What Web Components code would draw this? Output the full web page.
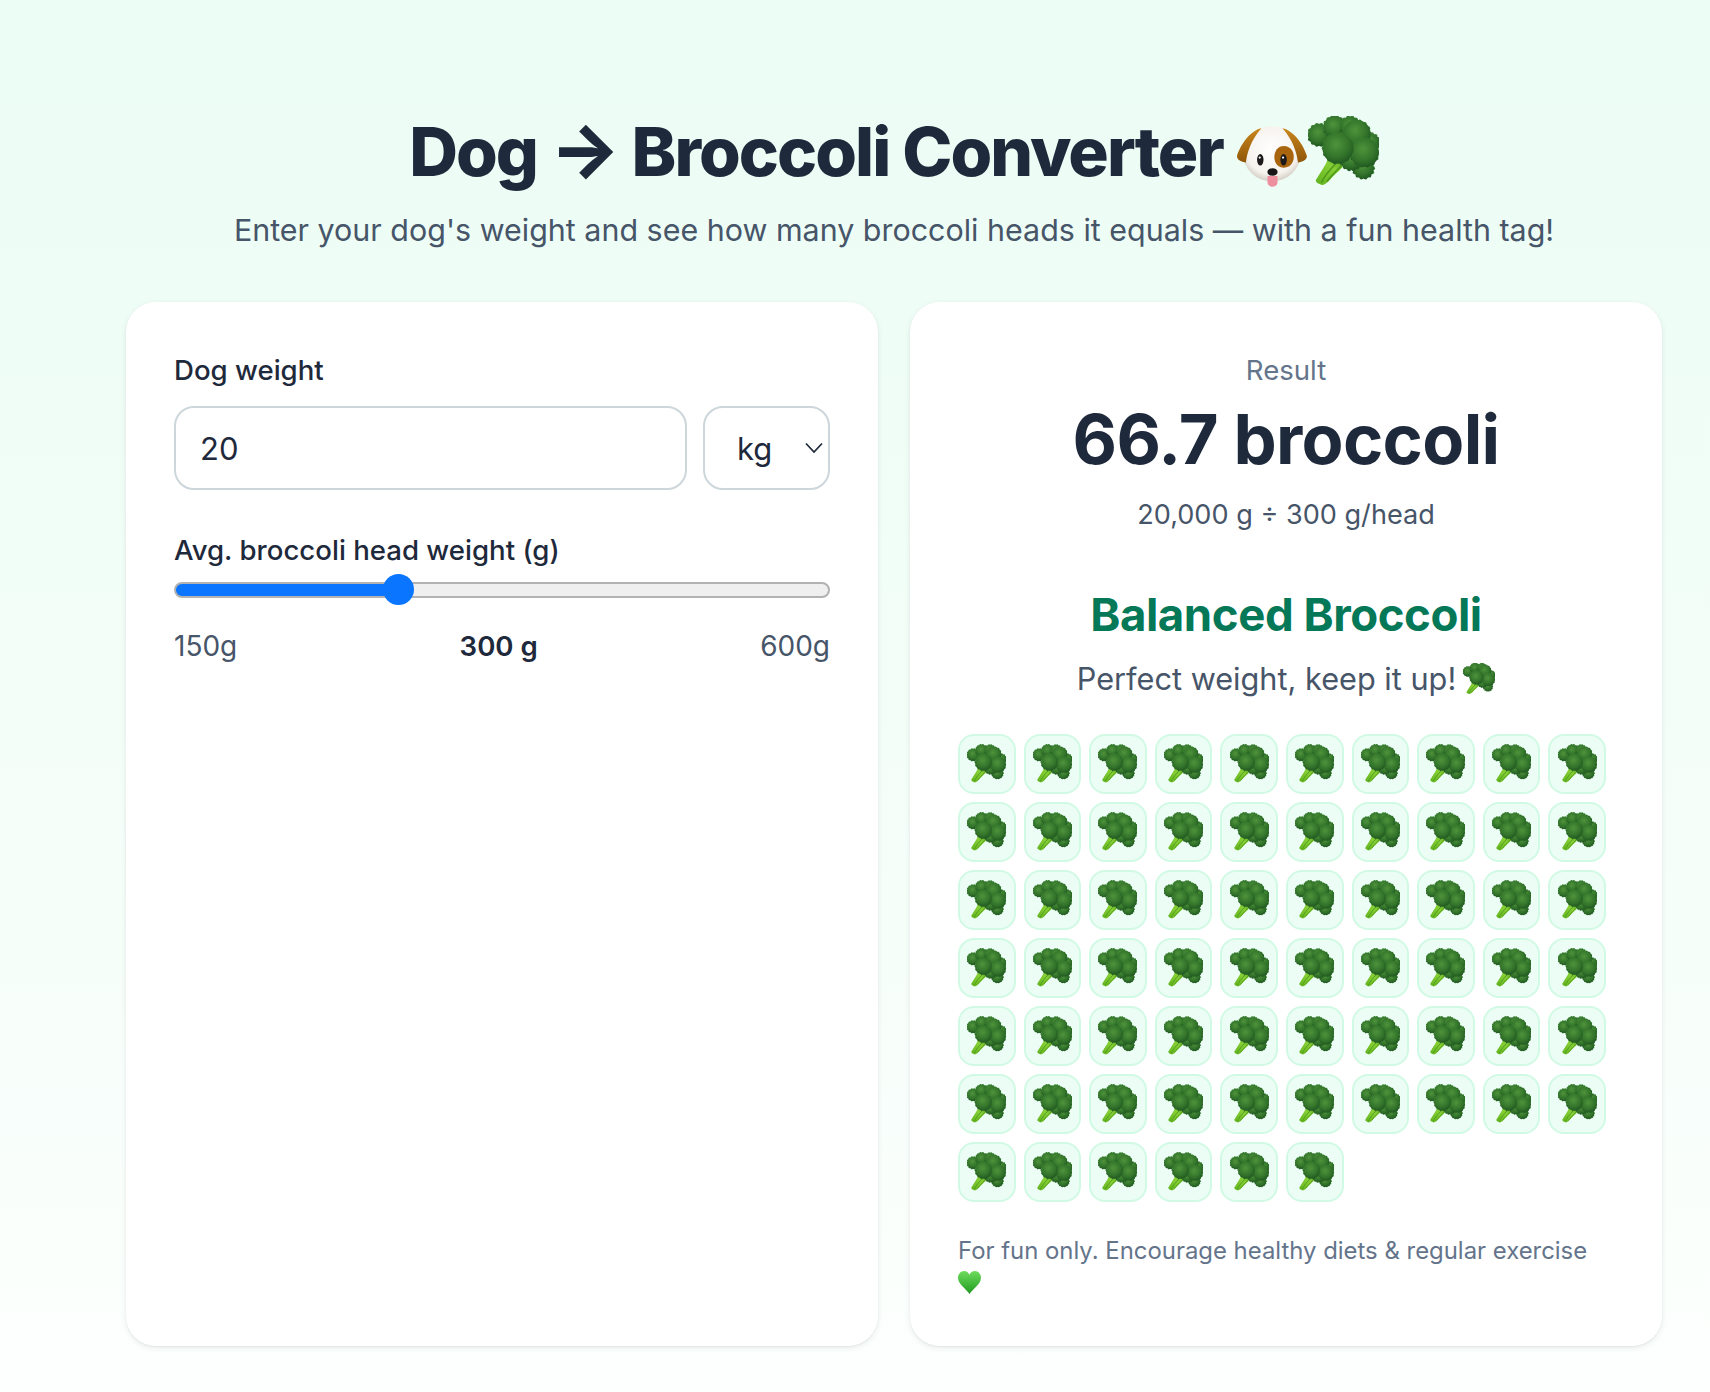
<!DOCTYPE html>
<html lang="en">
<head>
<meta charset="utf-8">
<title>Dog → Broccoli Converter</title>
<style>
  html, body { margin: 0; padding: 0; }
  body { font-family: Inter, "Noto Sans", sans-serif; color: #1e293b; }
</style>
</head>
<body>
<bc-app></bc-app>
<script>
// Crown of the broccoli: each floret is a shaded disc with a bumpy rim
const FLORETS = [
  [50, 47, 9.5], [39, 39, 10], [56, 24, 8.5], [10, 17, 10], [24, 10, 10],
  [38, 9.5, 9], [44, 16, 12.5], [51, 33, 13], [27, 29, 14]
];

function floretMarkup([cx, cy, r]) {
  let bumps = '';
  for (let i = 0; i < 14; i++) {
    const a = (i / 14) * Math.PI * 2;
    const x = (cx + Math.cos(a) * r * 0.92).toFixed(1);
    const y = (cy + Math.sin(a) * r * 0.92).toFixed(1);
    bumps += `<circle cx="${x}" cy="${y}" r="1.7" fill="${i > 1 && i < 7 ? '#235c22' : '#37802f'}"/>`;
  }
  return `${bumps}<circle cx="${cx}" cy="${cy}" r="${r}" fill="url(#f)"/>`;
}

const BROCCOLI_SVG = `
  <svg viewBox="0 0 64 64" width="100%" height="100%" aria-hidden="true">
    <defs>
      <radialGradient id="f" cx="44%" cy="38%" r="66%">
        <stop offset="0" stop-color="#4f933b"/>
        <stop offset=".62" stop-color="#33742b"/>
        <stop offset="1" stop-color="#1f5620"/>
      </radialGradient>
      <linearGradient id="s" x1="0" y1="1" x2="1" y2="0">
        <stop offset="0" stop-color="#5fb01e"/>
        <stop offset=".6" stop-color="#86cf35"/>
        <stop offset="1" stop-color="#4f9a22"/>
      </linearGradient>
    </defs>
    <path d="M7 58 C11 51 15 46 18 39 L24 40 L36 40 C33 45 27 50 22 55 C18 60 14 63 12 62 C9 61 7 60 7 58Z" fill="url(#s)"/>
    <path d="M12 60 C15 54 20 48 25 43 M17 59 C21 54 25 50 30 45" stroke="#4f9a1c" stroke-width="1.4" fill="none"/>
    <path d="M14 12 L40 6 L58 26 L52 42 L30 38 Z" fill="#245f23"/>
    ${FLORETS.map(floretMarkup).join('')}
  </svg>`;

const DOG_SVG = `
  <svg viewBox="0 0 64 64" width="100%" height="100%" aria-hidden="true">
    <defs>
      <radialGradient id="h" cx="50%" cy="42%" r="62%">
        <stop offset="0" stop-color="#ffffff"/>
        <stop offset=".72" stop-color="#f6f3ee"/>
        <stop offset="1" stop-color="#c9c2b8"/>
      </radialGradient>
      <linearGradient id="e" x1="0" y1="0" x2="0" y2="1">
        <stop offset="0" stop-color="#c9861c"/>
        <stop offset="1" stop-color="#8f5608"/>
      </linearGradient>
    </defs>
    <ellipse cx="31.5" cy="34" rx="26" ry="25" fill="url(#h)"/>
    <path d="M22 11 C12 13 3 26 0 36 C0 40 4 41 8 42 C9 33 13 21 22 11Z" fill="url(#e)"/>
    <path d="M41 11 C51 13 60 26 63 36 C63 40 59 41 55 42 C54 33 50 21 41 11Z" fill="url(#e)"/>
    <path d="M42 27 C49 27 52 33 51 39 C50 45 44 48 39 46 C34 44 33 38 34 34 C35 30 38 27 42 27Z" fill="#a9650d"/>
    <ellipse cx="21" cy="39.5" rx="2.9" ry="5.2" fill="#1c1a1a"/>
    <ellipse cx="42" cy="39.5" rx="2.9" ry="5.2" fill="#1c1a1a"/>
    <circle cx="20.5" cy="37.5" r="1" fill="#fff"/>
    <circle cx="41.5" cy="37.5" r="1" fill="#fff"/>
    <path d="M27.5 54 L36.5 54 L36.5 60 C36.5 65 27.5 65 27.5 60Z" fill="#ee8f9f"/>
    <ellipse cx="32" cy="50.5" rx="4.6" ry="3.4" fill="#161616"/>
  </svg>`;

const HEART_SVG = `
  <svg viewBox="0 0 24 24" width="100%" height="100%" aria-hidden="true">
    <defs>
      <linearGradient id="g" x1="0" y1="0" x2="0" y2="1">
        <stop offset="0" stop-color="#6fdc5c"/>
        <stop offset="1" stop-color="#1f9a20"/>
      </linearGradient>
    </defs>
    <path d="M12 24 C9 19 0 14 0 7 C0 3 3 0 6.4 0 C9 0 11 1.6 12 4 C13 1.6 15 0 17.6 0 C21 0 24 3 24 7 C24 14 15 19 12 24Z" fill="url(#g)"/>
  </svg>`;

const EMOJI = { broccoli: BROCCOLI_SVG, dog: DOG_SVG, heart: HEART_SVG };

class BcEmoji extends HTMLElement {
  constructor() {
    super();
    this.attachShadow({ mode: 'open' });
  }

  connectedCallback() {
    this.shadowRoot.innerHTML = `
      <style>
        :host { display: inline-block; width: 1em; height: 1em; line-height: 0; }
      </style>
      ${EMOJI[this.getAttribute('kind')] || ''}
    `;
  }
}
customElements.define('bc-emoji', BcEmoji);

class BcCard extends HTMLElement {
  constructor() {
    super();
    this.attachShadow({ mode: 'open' });
    this.shadowRoot.innerHTML = `
      <style>
        :host {
          display: block;
          box-sizing: border-box;
          background: #fff;
          border-radius: 30px;
          padding: 49px 48px 48px;
          box-shadow: 0 2px 6px rgba(15, 23, 42, 0.08), 0 1px 2px rgba(15, 23, 42, 0.05);
        }
      </style>
      <slot></slot>
    `;
  }
}
customElements.define('bc-card', BcCard);

class BcHeader extends HTMLElement {
  constructor() {
    super();
    this.attachShadow({ mode: 'open' });
    this.shadowRoot.innerHTML = `
      <style>
        :host { display: block; text-align: center; }
        h1 {
          margin: 0;
          font-size: 67.5px;
          line-height: 84px;
          font-weight: 800;
          letter-spacing: -0.029em;
          color: #1e293b;
          display: flex;
          justify-content: center;
          align-items: center;
        }
        .arrow { font-size: 1.1em; line-height: 1; }
        .icons { display: inline-flex; margin-left: 14px; margin-top: -2px; }
        bc-emoji { width: 71px; height: 71px; }
        p {
          margin: 14px 0 0;
          font-size: 30.45px;
          line-height: 44px;
          color: #475569;
        }
      </style>
      <h1><span>Dog <span class="arrow">→</span> Broccoli Converter</span><span class="icons"><bc-emoji kind="dog"></bc-emoji><bc-emoji kind="broccoli"></bc-emoji></span></h1>
      <p>Enter your dog's weight and see how many broccoli heads it equals — with a fun health tag!</p>
    `;
  }
}
customElements.define('bc-header', BcHeader);

class BcWeightForm extends HTMLElement {
  constructor() {
    super();
    this.attachShadow({ mode: 'open' });
    this.shadowRoot.innerHTML = `
      <style>
        :host { display: block; }
        label { display: block; font-size: 27.6px; line-height: 38px; font-weight: 500; color: #1e293b; }
        .row { display: flex; gap: 16px; margin-top: 17px; }
        input[type=number], select {
          box-sizing: border-box;
          height: 84px;
          border: 2px solid #cdd6da;
          border-radius: 20px;
          background: #fff;
          font: 400 31px Inter, sans-serif;
          color: #1e293b;
          outline: none;
          appearance: none;
          -moz-appearance: textfield;
        }
        input[type=number] { flex: 1; min-width: 0; padding: 0 24px; }
        input[type=number]::-webkit-inner-spin-button { appearance: none; }
        .select { position: relative; width: 127px; }
        select { width: 100%; padding: 0 0 0 32px; }
        .select svg { position: absolute; right: 7px; top: 36px; width: 18px; height: 12px; pointer-events: none; }
        .head { margin-top: 41px; }
        input[type=range] {
          display: block;
          appearance: none;
          width: 100%;
          height: 31px;
          margin: 5px 0 0;
          background: transparent;
        }
        input[type=range]::-webkit-slider-runnable-track {
          box-sizing: border-box;
          height: 16px;
          border-radius: 8px;
          border: 2px solid #b2b2b2;
          background: linear-gradient(to right, #0a75ff 0 222px, #efefef 222px);
        }
        input[type=range]::-webkit-slider-thumb {
          appearance: none;
          width: 31px;
          height: 31px;
          margin-top: -9.5px;
          border-radius: 50%;
          background: #0a75ff;
        }
        .scale {
          display: flex;
          justify-content: space-between;
          margin-top: 21px;
          font-size: 28px;
          line-height: 40px;
          color: #475569;
        }
        .scale b { font-weight: 600; font-size: 27.6px; color: #1e293b; }
      </style>
      <label for="w">Dog weight</label>
      <div class="row">
        <input id="w" type="number" value="20">
        <div class="select">
          <select aria-label="Unit"><option>kg</option><option>lb</option></select>
          <svg viewBox="0 0 18 12" fill="none" stroke="#1e293b" stroke-width="1.7"><path d="M1 1.5 L9 10 L17 1.5"/></svg>
        </div>
      </div>
      <label class="head" for="r">Avg. broccoli head weight (g)</label>
      <input id="r" type="range" min="150" max="600" value="300">
      <div class="scale"><span>150g</span><b>300 g</b><span>600g</span></div>
    `;
  }
}
customElements.define('bc-weight-form', BcWeightForm);

class BcTile extends HTMLElement {
  constructor() {
    super();
    this.attachShadow({ mode: 'open' });
    this.shadowRoot.innerHTML = `
      <style>
        :host {
          display: flex;
          align-items: center;
          justify-content: center;
          box-sizing: border-box;
          width: 57.6px;
          height: 60px;
          background: #ecfdf5;
          border: 2px solid #d1fae5;
          border-radius: 16px;
        }
        bc-emoji { width: 39px; height: 40px; }
      </style>
      <bc-emoji kind="broccoli"></bc-emoji>
    `;
  }
}
customElements.define('bc-tile', BcTile);

class BcResult extends HTMLElement {
  constructor() {
    super();
    this.attachShadow({ mode: 'open' });
  }

  get count() {
    return parseInt(this.getAttribute('count') || '0', 10);
  }

  connectedCallback() {
    this.render();
  }

  render() {
    const tiles = Array.from({ length: this.count }, () => '<bc-tile></bc-tile>').join('');
    this.shadowRoot.innerHTML = `
      <style>
        :host { display: block; }
        .summary { text-align: center; }
        .label { font-size: 27.6px; line-height: 38px; color: #64748b; }
        .value { margin-top: 11px; font-size: 68.6px; line-height: 80px; font-weight: 700; color: #1e293b; letter-spacing: -0.01em; }
        .calc { margin-top: 15px; font-size: 27.1px; line-height: 40px; color: #475569; }
        .tag { margin-top: 50px; font-size: 45.6px; line-height: 60px; font-weight: 700; color: #047857; letter-spacing: -0.01em; }
        .msg { margin-top: 12px; font-size: 30.7px; line-height: 44px; color: #475569; display: flex; justify-content: center; align-items: center; gap: 7px; }
        .msg bc-emoji { width: 32px; height: 32px; }
        .tiles { display: flex; flex-wrap: wrap; gap: 8px; margin-top: 33px; }
        .note { margin: 33px 0 0; font-size: 23.9px; line-height: 31.6px; color: #64748b; }
        .note bc-emoji { width: 23px; height: 23px; vertical-align: -3px; }
      </style>
      <div class="summary">
        <div class="label">Result</div>
        <div class="value">66.7 broccoli</div>
        <div class="calc">20,000 g ÷ 300 g/head</div>
        <div class="tag">Balanced Broccoli</div>
        <div class="msg"><span>Perfect weight, keep it up!</span><bc-emoji kind="broccoli"></bc-emoji></div>
      </div>
      <div class="tiles">${tiles}</div>
      <p class="note">For fun only. Encourage healthy diets &amp; regular exercise <bc-emoji kind="heart"></bc-emoji></p>
    `;
  }
}
customElements.define('bc-result', BcResult);

class BcApp extends HTMLElement {
  constructor() {
    super();
    this.attachShadow({ mode: 'open' });
    this.shadowRoot.innerHTML = `
      <style>
        :host {
          display: block;
          box-sizing: border-box;
          min-height: 1392px;
          padding: 110px 48px 47px 126px;
          background: linear-gradient(to bottom, #ebfdf5 0, #eefdf6 20%, #fcfffd 100%);
        }
        .grid { display: grid; grid-template-columns: 752px 752px; gap: 32px; margin-top: 50px; }
      </style>
      <bc-header></bc-header>
      <div class="grid">
        <bc-card><bc-weight-form></bc-weight-form></bc-card>
        <bc-card><bc-result count="66"></bc-result></bc-card>
      </div>
    `;
  }
}
customElements.define('bc-app', BcApp);
</script>
</body>
</html>
